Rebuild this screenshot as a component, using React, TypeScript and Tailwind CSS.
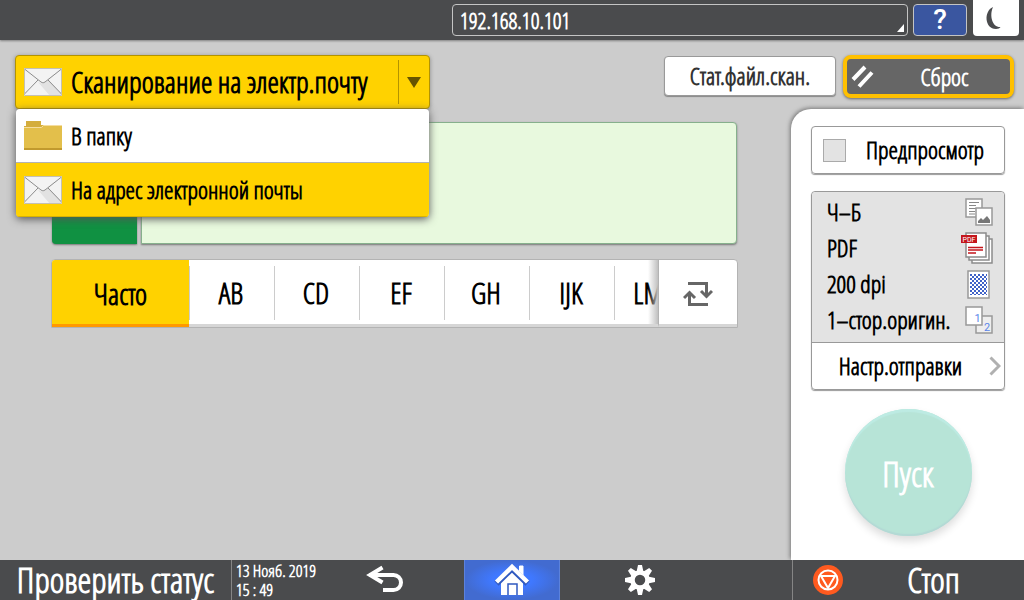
import clsx from 'clsx';
import { ReactNode, useState } from 'react';

type Destination = 'folder' | 'email';

const LETTER_TABS = ['AB', 'CD', 'EF', 'GH', 'IJK', 'LMN'];

/**
 * Scanner home screen: destination picker, address tabs and scan settings
 */
export default function App() {
  return (
    <div className="flex min-h-screen flex-col bg-[#cccccc] font-['Open_Sans_Condensed_Light','Roboto_Condensed',sans-serif] font-bold text-black">
      <Header />
      <Toolbar />
      <main className="flex flex-1">
        <AddressArea />
        <SettingsPanel />
      </main>
      <Footer />
    </div>
  );
}

function Header() {
  return (
    <header className="flex h-10 items-start justify-end bg-[#4a4b4d] pr-[5px] shadow-[0_1px_2px_#808080]">
      <button
        type="button"
        className="relative mt-1 h-8 w-[456px] rounded border border-[#c4c4c4] px-[7px] text-left text-[22px] leading-7 text-white"
      >
        192.168.10.101
        <svg className="absolute right-[3px] bottom-[3px]" width="7" height="8" viewBox="0 0 7 8">
          <path d="M7 0v8H0z" fill="#fff" />
        </svg>
      </button>
      <button
        type="button"
        className="mt-1 ml-[5px] h-8 w-[54px] rounded border border-[#c4c4c4] bg-[#3a56a0] font-['Roboto'] text-[28px] leading-7 font-medium text-white"
      >
        ?
      </button>
      <button
        type="button"
        aria-label="Режим сна"
        className="ml-1.5 flex h-9 w-[46px] items-center justify-center rounded-b bg-white"
      >
        <svg width="46" height="36" viewBox="0 0 46 36">
          <path d="M20 7C10.500 11 11.500 29 23 29c2 0 4-.8 4.500-2-8 .5-11.500-11-7.500-20z" fill="#4a4b4d" />
        </svg>
      </button>
    </header>
  );
}

function Toolbar() {
  return (
    <div className="flex h-[69px] items-start pt-[15px] pr-[10px] pl-[15px]">
      <DestinationPicker />
      <button
        type="button"
        className="mt-px ml-auto h-10 w-[172px] rounded border border-[#999999] bg-white text-2xl text-[#333333] shadow-[0_1px_1px_#888888]"
      >
        Стат.файл.скан.
      </button>
      <button
        type="button"
        className="ml-[7px] flex h-[43px] w-[171px] items-center rounded-lg border-4 border-[#ffc000] bg-[#666666] pl-1 text-2xl text-white shadow-[0_1px_3px_#666666]"
      >
        <svg width="24" height="26" viewBox="0 0 24 26">
          <path d="M2 15.500 14 3M8 22.500 21 8.500" stroke="#fff" strokeWidth="4" fill="none" />
        </svg>
        <span className="flex-1 pl-1 text-center">Сброс</span>
      </button>
    </div>
  );
}

/**
 * Drop-down with the two kinds of scan destination
 */
function DestinationPicker() {
  const [open, setOpen] = useState(true);
  const [selected, setSelected] = useState<Destination>('email');

  const choose = (destination: Destination) => {
    setSelected(destination);
    setOpen(false);
  };

  return (
    <div className="relative z-10 w-[415px]">
      <button
        type="button"
        aria-haspopup="menu"
        aria-expanded={open}
        onClick={() => setOpen(!open)}
        className="flex h-[54px] w-full items-center rounded border border-[#b39300] bg-[#ffd200] pl-2 shadow-[0_1px_4px_#888888]"
      >
        <EnvelopeIcon />
        <span className="ml-[9px] flex-1 text-left text-[29px] leading-9">Сканирование на электр.почту</span>
        <span className="flex h-11 w-[31px] items-center justify-center border-l border-[#b39300]">
          <svg width="14" height="11" viewBox="0 0 14 11">
            <path d="M0 0h14L7 11z" fill="#665400" />
          </svg>
        </span>
      </button>
      {open && (
        <div role="menu" className="absolute top-full left-px w-[413px] overflow-hidden rounded shadow-[0_2px_8px_#555555]">
          <MenuItem
            icon={<FolderIcon />}
            label="В папку"
            active={selected === 'folder'}
            onClick={() => choose('folder')}
          />
          <MenuItem
            icon={<EnvelopeIcon />}
            label="На адрес электронной почты"
            active={selected === 'email'}
            onClick={() => choose('email')}
          />
        </div>
      )}
    </div>
  );
}

interface MenuItemProps {
  icon: ReactNode;
  label: string;
  active: boolean;
  onClick: () => void;
}

function MenuItem({ icon, label, active, onClick }: MenuItemProps) {
  return (
    <button
      type="button"
      role="menuitem"
      onClick={onClick}
      className={clsx(
        'flex h-[54px] w-full items-center gap-[9px] border-b px-2 text-left text-2xl',
        active ? 'border-[#d9b300] bg-[#ffd200]' : 'border-[#b3b3b3] bg-white'
      )}
    >
      {icon}
      {label}
    </button>
  );
}

function AddressArea() {
  const [tab, setTab] = useState('Часто');

  return (
    <section className="min-w-0 flex-1 pt-[13px] pr-[53px] pl-[51px]">
      {/* Selected destination */}
      <div className="flex h-[122px] gap-1 px-px">
        <div className="w-[85px] rounded-l bg-[#109142] shadow-[0_1px_2px_#777777]" />
        <div className="flex-1 rounded-r border border-[#86b08c] bg-[#e8f9de] shadow-[0_1px_2px_#777777]" />
      </div>

      {/* Address book index */}
      <div className="mt-[15px] flex h-[69px] overflow-hidden rounded-t border border-[#b3b3b3] bg-white text-[29px]">
        <button
          type="button"
          onClick={() => setTab('Часто')}
          className={clsx(
            'w-[137px] shrink-0 border-b-3 pt-1',
            tab === 'Часто' ? 'border-[#ff9900] bg-[#ffd200]' : 'border-[#d6d6d6]'
          )}
        >
          Часто
        </button>
        <div className="relative flex min-w-0 flex-1 overflow-hidden border-b-3 border-[#d6d6d6]">
          {LETTER_TABS.map((letters) => (
            <button
              key={letters}
              type="button"
              onClick={() => setTab(letters)}
              className="mt-1.5 mb-1 w-[85px] shrink-0 border-l border-[#cccccc] pr-0.5"
            >
              {letters}
            </button>
          ))}
          <div className="absolute inset-y-0 right-0 w-2.5 bg-linear-to-r from-white/0 to-[#c0c0c0]" />
        </div>
        <button
          type="button"
          aria-label="Переключить указатель"
          className="flex w-[79px] shrink-0 items-center justify-center border-b-3 border-l border-b-[#d6d6d6] border-l-[#b3b3b3]"
        >
          <svg className="mt-1" width="30" height="26" viewBox="0 0 30 26" fill="none" stroke="#666" strokeWidth="3">
            <path d="M5 2.500h18.500V15M18 10l5.500 5.500L29 10M25 23.500H6.500V12M1 17l5.500-5.500L12 17" />
          </svg>
        </button>
      </div>
    </section>
  );
}

const SETTINGS = [
  { label: 'Ч–Б', icon: <ColorModeIcon /> },
  { label: 'PDF', icon: <PdfIcon /> },
  { label: '200 dpi', icon: <ResolutionIcon /> },
  { label: '1–стор.оригин.', icon: <SidesIcon /> },
];

function SettingsPanel() {
  return (
    <aside className="flex w-[233px] shrink-0 flex-col rounded-tl-[20px] bg-white pt-[17px] pr-[19px] pb-6 pl-5 shadow-[-1px_-1px_4px_#777777]">
      <label className="flex h-12 items-center rounded border border-[#999999] pl-[11px] text-2xl shadow-[0_1px_1px_#999999]">
        <input
          type="checkbox"
          className="size-[23px] shrink-0 appearance-none border border-[#aaaaaa] bg-[#e3e3e3] checked:bg-[#ffd200]"
        />
        <span className="flex-1 text-center">Предпросмотр</span>
      </label>

      <div className="mt-[17px] rounded border border-[#999999] shadow-[0_1px_1px_#999999]">
        <ul className="rounded-t bg-[#e3e3e3] pt-0.5 pb-1">
          {SETTINGS.map((setting) => (
            <li key={setting.label} className="flex h-9 items-center justify-between pr-[11px] pl-[15px] text-2xl">
              {setting.label}
              {setting.icon}
            </li>
          ))}
        </ul>
        <button
          type="button"
          className="flex h-[47px] w-full items-center border-t border-[#999999] pr-[3px] text-2xl"
        >
          <span className="flex-1 text-center">Настр.отправки</span>
          <svg width="12" height="20" viewBox="0 0 12 20">
            <path d="m1.500 1.500 8.500 8.500-8.500 8.500" fill="none" stroke="#b0b0b0" strokeWidth="3" />
          </svg>
        </button>
      </div>

      <button
        type="button"
        className="mt-[19px] size-[127px] self-center rounded-full bg-[#b7e4d7] pt-1 text-[35px] text-white shadow-[inset_0_3px_1px_#bdebe3,inset_0_-2px_1px_#b3d9d5,0_5px_8px_#dddddd]"
      >
        Пуск
      </button>
    </aside>
  );
}

function Footer() {
  return (
    <footer className="flex h-10 bg-[#4a4b4d] text-white">
      <button type="button" className="w-[232px] border-r border-[#858585] text-[35px] leading-9">
        Проверить статус
      </button>
      <time dateTime="2019-11-13T15:49" className="w-[104px] pt-px pl-1 text-[17px] leading-[19px]">
        13 Нояб. 2019
        <br />
        15 : 49
      </time>
      <nav className="flex gap-8">
        <button type="button" aria-label="Назад" className="flex w-24 items-center justify-center">
          <svg width="38" height="30" viewBox="0 0 38 30">
            <path d="M4 10h24.500a7.500 7.500 0 0 1 0 15H18M17.500 2.500 5 10l12.500 7.500" fill="none" stroke="#fff" strokeWidth="4" />
          </svg>
        </button>
        <button
          type="button"
          aria-label="Домой"
          className="flex w-24 items-center justify-center border-x border-[#5c82dc] bg-radial from-[#3f78ff] from-30% to-[#426bd0] to-70%"
        >
          <svg width="36" height="34" viewBox="0 0 36 34">
            <path d="M7 19 18 9l11 10v13H7z" fill="#fff" />
            <path d="M14 32V21h9v11" fill="#fff" stroke="#315ac0" strokeWidth="1.500" />
            <path d="M25.500 11V3H29v11" fill="#fff" stroke="#fff" />
            <path d="M2.500 20.500 18 5.500l15.500 15" fill="none" stroke="#315ac0" strokeWidth="6" />
            <path d="M2.500 19 18 4l15.500 15" fill="none" stroke="#fff" strokeWidth="4.500" />
          </svg>
        </button>
        <button type="button" aria-label="Настройки" className="flex w-24 items-center justify-center">
          <svg width="32" height="32" viewBox="0 0 32 32">
            <g fill="#fff">
              <path d="M14 1h4l1.500 7h-7z" />
              <path d="M14 1h4l1.500 7h-7z" transform="rotate(45 16 16)" />
              <path d="M14 1h4l1.500 7h-7z" transform="rotate(90 16 16)" />
              <path d="M14 1h4l1.500 7h-7z" transform="rotate(135 16 16)" />
              <path d="M14 1h4l1.500 7h-7z" transform="rotate(180 16 16)" />
              <path d="M14 1h4l1.500 7h-7z" transform="rotate(225 16 16)" />
              <path d="M14 1h4l1.500 7h-7z" transform="rotate(270 16 16)" />
              <path d="M14 1h4l1.500 7h-7z" transform="rotate(315 16 16)" />
            </g>
            <circle cx="16" cy="16" r="7.500" fill="#4a4b4d" stroke="#fff" strokeWidth="4.500" />
          </svg>
        </button>
      </nav>
      <button
        type="button"
        className="ml-auto flex w-[232px] items-center border-l border-[#858585] pl-5 text-[35px] leading-9"
      >
        <svg width="30" height="30" viewBox="0 0 30 30">
          <circle cx="15" cy="15" r="15" fill="#ff5a1f" />
          <circle cx="15" cy="15" r="9.500" fill="none" stroke="#fff" strokeWidth="2" />
          <path d="M8 11h14l-7 12z" fill="none" stroke="#fff" strokeWidth="2" />
        </svg>
        <span className="flex-1 text-center">Стоп</span>
      </button>
    </footer>
  );
}

function EnvelopeIcon() {
  return (
    <svg className="shrink-0" width="38" height="28" viewBox="0 0 38 28">
      <path d="M0 0h38v28H0z" fill="#f3f3f3" />
      <path d="m38 1-14 10 14 15v2H26L14 14l5 2z" fill="#e2e2e2" />
      <path d="M.5 1 17 14q2 2 4 0L37.500 1M.5 26 14 12M37.500 26 24 12" fill="none" stroke="#8c8c8c" />
      <path d="M.5 .5h37v27H.5z" fill="none" stroke="#c4c0b4" />
    </svg>
  );
}

function FolderIcon() {
  return (
    <svg className="shrink-0" width="38" height="29" viewBox="0 0 38 29">
      <path d="M2 0h15v4h21v5H0V5h2z" fill="#d4ad3d" />
      <path d="M0 6h17l2-2h19v24H0z" fill="#e3bf4b" />
      <path d="M0 6.500h17.500l2-2H38" fill="none" stroke="#f5dda0" />
      <path d="M0 28h38" stroke="#c19a2e" strokeWidth="2" />
    </svg>
  );
}

function ColorModeIcon() {
  return (
    <svg className="shrink-0" width="28" height="28" viewBox="0 0 28 28" fill="#fff" stroke="#999">
      <path d="M1 1h16v18H1z" strokeWidth="1.500" />
      <path d="M4 4.500h10M4 7.500h7M4 10.500h10M4 13.500h6M4 16h6" stroke="#888" />
      <path d="M11 10h16v17H11z" strokeWidth="1.500" />
      <path d="M13 25v-2l3-3 2 2 4-4 3 4v3z" fill="#777" stroke="none" />
    </svg>
  );
}

function PdfIcon() {
  return (
    <svg className="shrink-0" width="32" height="32" viewBox="0 0 32 32" fill="#fff" stroke="#8c8c8c" strokeWidth="1.500">
      <path d="M11 7h20v24H11z" />
      <path d="M8 4h20v24H8z" />
      <path d="M5 1h20v24H5z" />
      <path d="M0 3h16v8H0z" fill="#c4161c" stroke="none" />
      <text x="1.500" y="9.500" fontSize="7" fontFamily="Roboto" fontWeight="400" fill="#fff" stroke="none">
        PDF
      </text>
      <path d="M7 15.500h15M7 18h15M7 21h8" stroke="#c4161c" />
    </svg>
  );
}

function ResolutionIcon() {
  return (
    <svg className="mr-[3px] shrink-0" width="23" height="29" viewBox="0 0 23 29">
      <defs>
        <pattern id="dots" x="3" y="4" width="4" height="4" patternUnits="userSpaceOnUse">
          <path d="M0 0h2v2H0zM2 2h2v2H2z" fill="#3f62c8" />
        </pattern>
      </defs>
      <path d="M1 1h21v27H1z" fill="#fff" stroke="#999" strokeWidth="1.500" />
      <path d="M3 4h17v21H3z" fill="url(#dots)" />
    </svg>
  );
}

function SidesIcon() {
  return (
    <svg className="shrink-0" width="28" height="28" viewBox="0 0 28 28" stroke="#999" strokeWidth="1.500">
      <path d="M11 10h16v17H11z" fill="#eee" />
      <path d="M1 1h16v18H1z" fill="#fff" />
      <g fontSize="11" fontFamily="Roboto" fontWeight="400" fill="#5b86ea" stroke="none">
        <text x="9.500" y="16">1</text>
        <text x="19" y="25">2</text>
      </g>
    </svg>
  );
}
